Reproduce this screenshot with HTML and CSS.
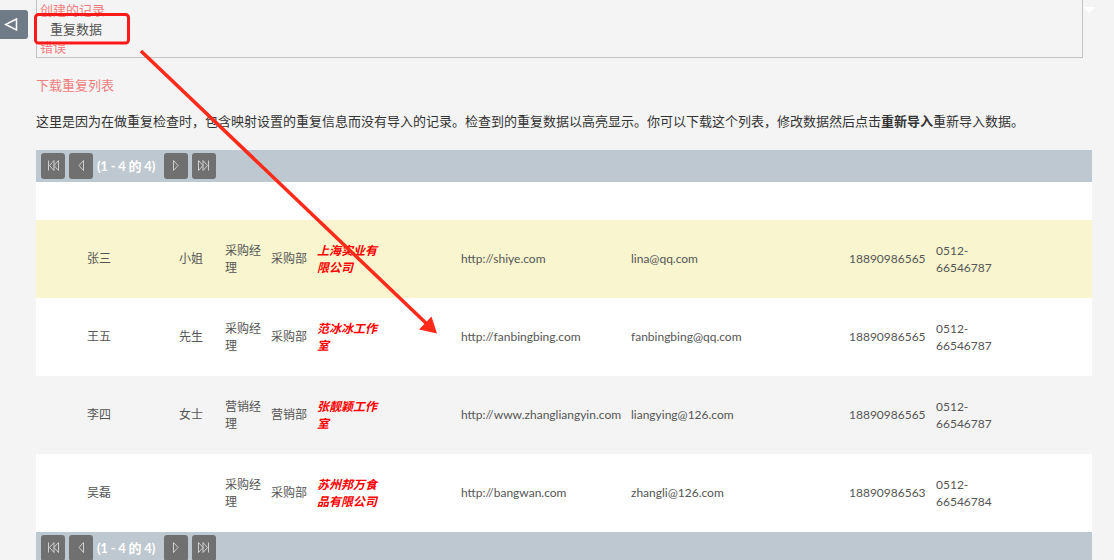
FILE: index.html
```html
<!DOCTYPE html>
<html lang="zh">
<head>
<meta charset="utf-8">
<title>重复数据</title>
<link rel="stylesheet" href="styles.css">
</head>
<body>
<div class="sidetab"><svg width="14" height="13" viewBox="0 0 14 13"><polygon points="12.5,1 1.5,6.5 12.5,12" fill="none" stroke="#fff" stroke-width="1.5"/></svg></div>
<main class="page">
  <div class="dropdown">
    <ul>
      <li>创建的记录</li>
      <li class="sel">重复数据</li>
      <li>错误</li>
    </ul>
    <span class="caret"></span>
  </div>
  <a class="download">下载重复列表</a>
  <p class="desc">这里是因为在做重复检查时，包含映射设置的重复信息而没有导入的记录。检查到的重复数据以高亮显示。你可以下载这个列表，修改数据然后点击<b>重新导入</b>重新导入数据。</p>

  <div class="pager">
    <span class="btn"><svg width="12" height="11" viewBox="0 0 12 11"><path d="M1.5 0.5v10M7 0.5L2.5 5.5 7 10.5zM11.5 0.5L7 5.5l4.5 5z" fill="none" stroke="#cfcfcf" stroke-width="1"/></svg></span>
    <span class="btn"><svg width="6" height="11" viewBox="0 0 6 11"><path d="M5.5 0.5L1 5.5l4.5 5z" fill="none" stroke="#cfcfcf" stroke-width="1"/></svg></span>
    <span class="count">(1 - 4 的 4)</span>
    <span class="btn"><svg width="6" height="11" viewBox="0 0 6 11"><path d="M0.5 0.5L5 5.5l-4.5 5z" fill="none" stroke="#cfcfcf" stroke-width="1"/></svg></span>
    <span class="btn"><svg width="12" height="11" viewBox="0 0 12 11"><path d="M10.5 0.5v10M5 0.5l4.5 5L5 10.5zM0.5 0.5L5 5.5l-4.5 5z" fill="none" stroke="#cfcfcf" stroke-width="1"/></svg></span>
  </div>

  <div class="table">
    <div class="row head"></div>
    <div class="row hl">
      <span></span><span class="c">张三</span><span class="c">小姐</span><span class="c">采购经理</span><span class="c">采购部</span>
      <span class="c"><span class="co">上海实业有限公司</span></span>
      <span class="c">http://shiye.com</span><span class="c">lina@qq.com</span><span class="c">18890986565</span>
      <span class="c"><span class="tel">0512-66546787</span></span>
    </div>
    <div class="row">
      <span></span><span class="c">王五</span><span class="c">先生</span><span class="c">采购经理</span><span class="c">采购部</span>
      <span class="c"><span class="co">范冰冰工作室</span></span>
      <span class="c">http://fanbingbing.com</span><span class="c">fanbingbing@qq.com</span><span class="c">18890986565</span>
      <span class="c"><span class="tel">0512-66546787</span></span>
    </div>
    <div class="row alt">
      <span></span><span class="c">李四</span><span class="c">女士</span><span class="c">营销经理</span><span class="c">营销部</span>
      <span class="c"><span class="co">张靓颖工作室</span></span>
      <span class="c">http://www.zhangliangyin.com</span><span class="c">liangying@126.com</span><span class="c">18890986565</span>
      <span class="c"><span class="tel">0512-66546787</span></span>
    </div>
    <div class="row">
      <span></span><span class="c">吴磊</span><span class="c"></span><span class="c">采购经理</span><span class="c">采购部</span>
      <span class="c"><span class="co">苏州邦万食品有限公司</span></span>
      <span class="c">http://bangwan.com</span><span class="c">zhangli@126.com</span><span class="c">18890986563</span>
      <span class="c"><span class="tel">0512-66546784</span></span>
    </div>
  </div>

  <div class="pager">
    <span class="btn"><svg width="12" height="11" viewBox="0 0 12 11"><path d="M1.5 0.5v10M7 0.5L2.5 5.5 7 10.5zM11.5 0.5L7 5.5l4.5 5z" fill="none" stroke="#cfcfcf" stroke-width="1"/></svg></span>
    <span class="btn"><svg width="6" height="11" viewBox="0 0 6 11"><path d="M5.5 0.5L1 5.5l4.5 5z" fill="none" stroke="#cfcfcf" stroke-width="1"/></svg></span>
    <span class="count">(1 - 4 的 4)</span>
    <span class="btn"><svg width="6" height="11" viewBox="0 0 6 11"><path d="M0.5 0.5L5 5.5l-4.5 5z" fill="none" stroke="#cfcfcf" stroke-width="1"/></svg></span>
    <span class="btn"><svg width="12" height="11" viewBox="0 0 12 11"><path d="M10.5 0.5v10M5 0.5l4.5 5L5 10.5zM0.5 0.5L5 5.5l-4.5 5z" fill="none" stroke="#cfcfcf" stroke-width="1"/></svg></span>
  </div>
</main>

<svg class="annot" width="1114" height="560" viewBox="0 0 1114 560">
  <rect x="35.5" y="14.5" width="93" height="28.5" rx="3" fill="none" stroke="#ff1a1a" stroke-width="3"/>
  <line x1="141" y1="51" x2="428" y2="325" stroke="#ff2a1a" stroke-width="3.5"/>
  <polygon points="437,333.5 419,329.5 431.5,316.5" fill="#ff2a1a"/>
</svg>
</body>
</html>
```
FILE: styles.css
```css
* { box-sizing: border-box; }
html, body { margin: 0; height: 100%; overflow: hidden; }
body {
  background: #f4f4f4;
  font-family: "Lato", "Noto Sans CJK SC", sans-serif;
  font-size: 12px;
  color: #555;
  position: relative;
}
.sidetab {
  position: absolute;
  left: 0;
  top: 10px;
  width: 28px;
  height: 29px;
  background: #6f7c88;
  border-radius: 0 3px 3px 0;
  display: flex;
  align-items: center;
  padding-left: 4px;
}
.sidetab svg { display: block; }
.page { padding-left: 36px; width: 1092px; }
.dropdown {
  position: relative;
  width: 1047px;
  border: 1px solid #c3c3c3;
  border-top: 0;
  padding-top: 1px;
  font-size: 13px;
}
.dropdown ul { list-style: none; margin: 0; padding: 0; }
.dropdown li { line-height: 18.5px; padding-left: 3px; color: #f08080; }
.dropdown li.sel { color: #555; padding-left: 13px; }
.caret {
  position: absolute;
  right: -13px;
  top: 7px;
  width: 0;
  height: 0;
  border-left: 6.5px solid transparent;
  border-right: 6.5px solid transparent;
  border-top: 6px solid #fff;
}
.download {
  display: block;
  margin-top: 17px;
  line-height: 20px;
  font-size: 13px;
  color: #f08080;
}
.desc {
  margin: 16px 0 19px;
  line-height: 20px;
  font-size: 13px;
  color: #333;
}
.desc b { font-weight: bold; }
.pager {
  height: 32px;
  background: #bec8d1;
  display: flex;
  align-items: flex-start;
  gap: 4px;
  padding: 3px 5px;
}
.btn {
  width: 24px;
  height: 26px;
  background: #707070;
  border-radius: 3px;
  display: flex;
  align-items: center;
  justify-content: center;
}
.btn svg { display: block; }
.count {
  color: #fff;
  font-weight: bold;
  font-size: 13px;
  line-height: 26px;
  margin-right: 5px;
  letter-spacing: -0.2px;
}
.row {
  display: grid;
  grid-template-columns: 51px 92px 46px 46px 46px 144px 170px 218px 87px 156px;
  height: 78px;
  align-items: center;
  background: #fff;
}
.row.head { height: 38px; }
.row.hl { background: #f9f6cf; }
.row.alt { background: #f4f4f4; }
.c { padding-right: 6px; line-height: 17px; white-space: normal; }
.co {
  display: block;
  width: 64px;
  color: #ff0000;
  font-weight: bold;
  font-style: italic;
}
.tel { display: block; width: 60px; }
.annot { position: absolute; left: 0; top: 0; pointer-events: none; }
```
